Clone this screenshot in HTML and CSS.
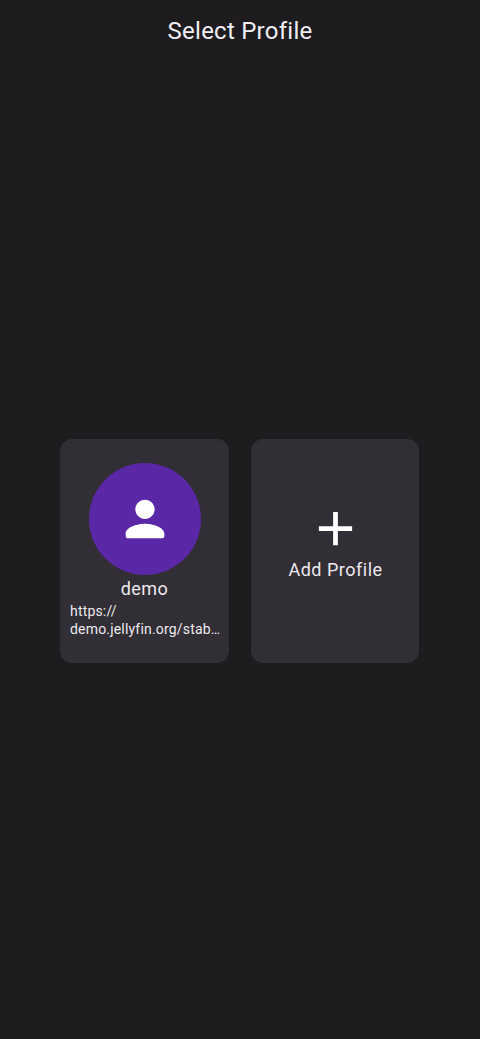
FILE: index.html
```html
<!DOCTYPE html>
<html lang="en">
<head>
<meta charset="utf-8">
<title>Select Profile</title>
<link rel="stylesheet" href="styles.css">
</head>
<body>
<header class="title">Select Profile</header>
<main class="content">
  <div class="grid">
    <section class="card profile">
      <div class="avatar">
        <svg class="person" viewBox="0 0 24 24" fill="#fff"><path d="M12 12c2.21 0 4-1.79 4-4s-1.79-4-4-4-4 1.79-4 4 1.79 4 4 4zm0 2c-2.67 0-8 1.34-8 4v1c0 .55.45 1 1 1h14c.55 0 1-.45 1-1v-1c0-2.66-5.33-4-8-4z"/></svg>
      </div>
      <div class="name">demo</div>
      <div class="url"><span>https://</span><span class="url-line">demo.jellyfin.org/stab…</span></div>
    </section>
    <section class="card add">
      <svg class="plus" viewBox="0 0 24 24" fill="#fff"><path d="M19 13h-6v6h-2v-6H5v-2h6V5h2v6h6v2z"/></svg>
      <div class="add-label">Add Profile</div>
    </section>
  </div>
</main>
</body>
</html>
```
FILE: styles.css
```css
* { box-sizing: border-box; }
html, body { margin: 0; height: 100%; }
body {
  background: #1e1c1f;
  color: #ece9ee;
  font-family: Roboto, sans-serif;
  display: flex;
  flex-direction: column;
  height: 1039px;
  overflow: hidden;
}
.title {
  height: 62px;
  line-height: 62px;
  text-align: center;
  font-size: 24px;
  letter-spacing: 0.25px;
  color: #f0eef2;
}
.content {
  flex: 1;
  display: flex;
  align-items: center;
  justify-content: center;
  padding-right: 1px;
}
.grid {
  display: grid;
  grid-template-columns: 169px 168px;
  column-gap: 22px;
  margin-top: 1px;
}
.card {
  height: 224px;
  background: #322e35;
  border-radius: 12px;
  display: flex;
  flex-direction: column;
  align-items: center;
}
.profile { padding: 24px 9px 0 10px; }
.avatar {
  width: 112px;
  height: 112px;
  flex: none;
  border-radius: 50%;
  background: #5a27a6;
  display: flex;
  align-items: center;
  justify-content: center;
  margin-right: 1px;
}
.person { width: 58px; height: 58px; }
.name {
  font-size: 18px;
  line-height: 24px;
  margin-top: 2px;
  margin-right: 1px;
  letter-spacing: 0.5px;
}
.url {
  align-self: stretch;
  font-size: 14px;
  line-height: 18px;
  letter-spacing: 0.18px;
  margin-top: 1px;
  min-width: 0;
}
.url span { display: block; white-space: nowrap; }
.add { padding-top: 61px; }
.plus { width: 57px; height: 57px; flex: none; }
.add-label {
  font-size: 18px;
  line-height: 24px;
  letter-spacing: 0.5px;
  margin-top: 1px;
  margin-left: 1px;
}
```
